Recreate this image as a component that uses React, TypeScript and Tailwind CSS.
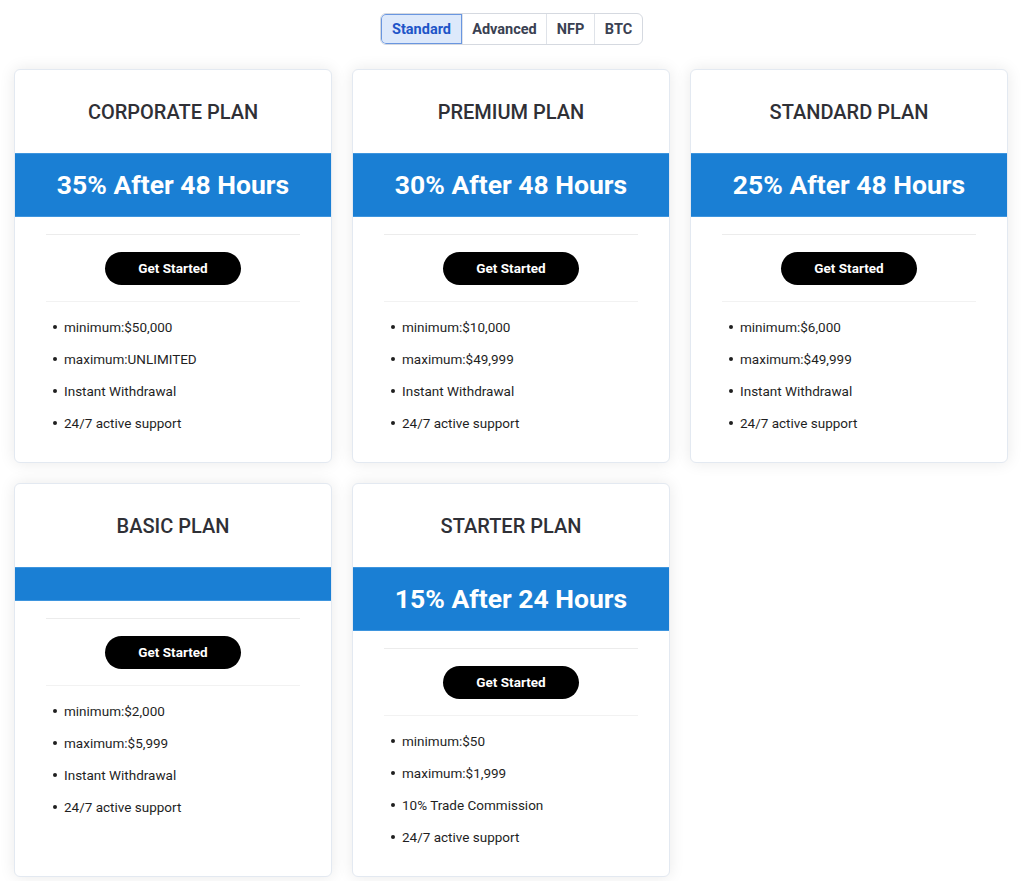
const tabs = ["Standard", "Advanced", "NFP", "BTC"];

const plans = [
  {
    name: "CORPORATE PLAN",
    rate: "35% After 48 Hours",
    items: ["minimum:$50,000", "maximum:UNLIMITED", "Instant Withdrawal", "24/7 active support"],
  },
  {
    name: "PREMIUM PLAN",
    rate: "30% After 48 Hours",
    items: ["minimum:$10,000", "maximum:$49,999", "Instant Withdrawal", "24/7 active support"],
  },
  {
    name: "STANDARD PLAN",
    rate: "25% After 48 Hours",
    items: ["minimum:$6,000", "maximum:$49,999", "Instant Withdrawal", "24/7 active support"],
  },
  {
    name: "BASIC PLAN",
    rate: "",
    items: ["minimum:$2,000", "maximum:$5,999", "Instant Withdrawal", "24/7 active support"],
  },
  {
    name: "STARTER PLAN",
    rate: "15% After 24 Hours",
    items: ["minimum:$50", "maximum:$1,999", "10% Trade Commission", "24/7 active support"],
  },
];

const tabWidths: Record<string, string> = {
  Standard: "w-[81px]",
  Advanced: "w-[84px]",
  NFP: "w-[48px]",
  BTC: "w-[48px]",
};

const PlanCard = ({ plan }: { plan: (typeof plans)[number] }) => {
  return (
    <div className="bg-white rounded-[6px] border border-[#e3e9f1] shadow-[0_0_16px_0_rgba(0,0,0,0.09)] pb-[23px]">
      <h2 className="pt-[29px] pb-[28px] text-center text-[20px] leading-[26px] font-medium text-[#2f3036]">
        {plan.name}
      </h2>
      <div className="bg-[#1a7fd4] border-y border-[#3e95de] py-4 min-h-[33px] text-center text-white font-bold text-[26.5px] leading-[30px]">
        {plan.rate}
      </div>
      <div className="mx-[31px] mt-[17px] border-t border-[#ececec]" />
      <div className="flex justify-center pt-[17px] pb-[16px]">
        <button className="w-[136px] h-[33px] rounded-full bg-black text-white font-bold text-[13.5px]">
          Get Started
        </button>
      </div>
      <div className="mx-[31px] border-t border-[#f2f2f2]" />
      <ul className="pt-[9px]">
        {plan.items.map((item, i) => (
          <li key={i} className="flex items-center gap-[7px] pl-[38px] h-[32px] text-[13.5px] text-[#1f1f1f]">
            <span className="w-[4px] h-[4px] rounded-full bg-[#1f1f1f]" />
            {item}
          </li>
        ))}
      </ul>
    </div>
  );
};

const App = () => {
  return (
    <div className="min-h-[881px] bg-white font-['Roboto',sans-serif]">
      <div className="flex justify-center pt-[13px]">
        <div className="flex h-[32px] rounded-[6px] border border-[#d5d9e0] overflow-hidden ml-[-1px]">
          {tabs.map((tab, i) => (
            <button
              key={tab}
              className={
                i === 0
                  ? `${tabWidths[tab]} h-full pt-[1px] text-[14.5px] font-bold text-[#1e55c8] bg-[#dde9fb] shadow-[inset_0_0_0_1px_#6996e0] rounded-l-[5px]`
                  : `${tabWidths[tab]} h-full pt-[1px] text-[14.5px] font-bold text-[#3a4152] border-l border-[#dfe3e9]`
              }
            >
              {tab}
            </button>
          ))}
        </div>
      </div>
      <div className="grid grid-cols-3 gap-5 pl-[14px] pr-[16px] pt-[24px] pb-[4px]">
        {plans.map((plan) => (
          <PlanCard key={plan.name} plan={plan} />
        ))}
      </div>
    </div>
  );
};

export default App;
